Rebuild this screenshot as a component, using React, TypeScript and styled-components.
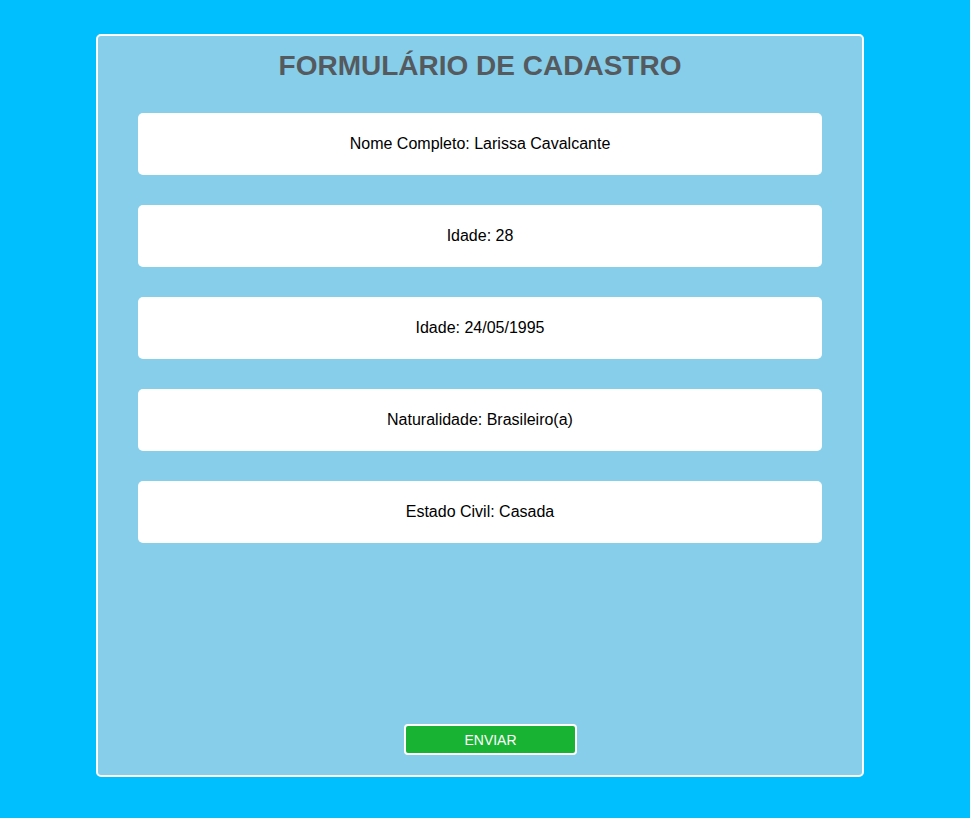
import React from "react";
import styled, { createGlobalStyle } from "styled-components";

const GlobalStyle = createGlobalStyle`
  html, body {
    margin: 0;
    padding: 0;
    background: #00bfff;
    font-family: "Liberation Sans", Arial, sans-serif;
  }
`;

const Page = styled.div`
  padding: 34px 0 41px 96px;
  min-height: 818px;
  box-sizing: border-box;
`;

const Card = styled.form`
  width: 768px;
  height: 743px;
  box-sizing: border-box;
  background: #87ceeb;
  border: 2px solid #ffffff;
  border-radius: 5px;
  display: flex;
  flex-direction: column;
  padding: 0 40px 20px;
`;

const Title = styled.h1`
  margin: 14px 0 31px;
  text-align: center;
  font-size: 28px;
  line-height: 32px;
  font-weight: 700;
  color: #555a5e;
`;

const Fields = styled.div`
  display: flex;
  flex-direction: column;
  gap: 30px;
`;

const Field = styled.div`
  height: 62px;
  background: #ffffff;
  border-radius: 5px;
  display: flex;
  align-items: center;
  justify-content: center;
  font-size: 16px;
  color: #000000;
`;

const Footer = styled.div`
  margin-top: auto;
  display: flex;
  justify-content: center;
  padding-left: 21px;
`;

const Button = styled.button`
  width: 173px;
  height: 31px;
  background: #19b334;
  border: 2px solid #ffffff;
  border-radius: 4px;
  color: #ffffff;
  font-family: "Liberation Sans", Arial, sans-serif;
  font-size: 14px;
  cursor: pointer;
`;

const fields = [
  "Nome Completo: Larissa Cavalcante",
  "Idade: 28",
  "Idade: 24/05/1995",
  "Naturalidade: Brasileiro(a)",
  "Estado Civil: Casada",
];

export default function App() {
  return (
    <>
      <GlobalStyle />
      <Page>
        <Card onSubmit={(e) => e.preventDefault()}>
          <Title>FORMULÁRIO DE CADASTRO</Title>
          <Fields>
            {fields.map((f) => (
              <Field key={f}>{f}</Field>
            ))}
          </Fields>
          <Footer>
            <Button type="submit">ENVIAR</Button>
          </Footer>
        </Card>
      </Page>
    </>
  );
}
